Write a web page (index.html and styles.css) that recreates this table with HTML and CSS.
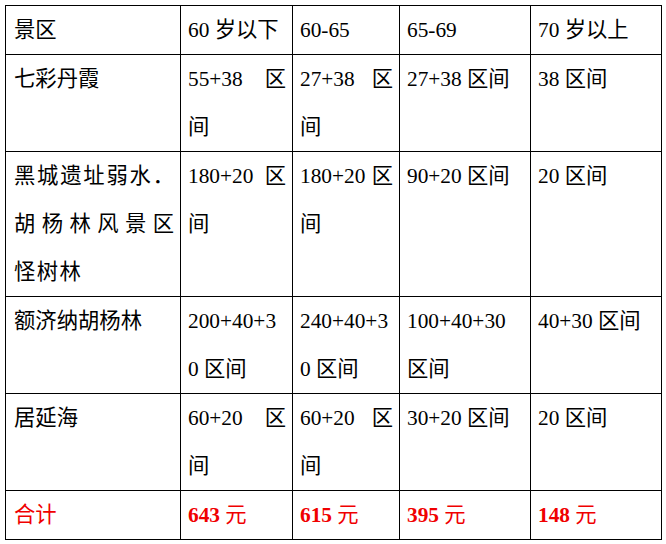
FILE: index.html
```html
<!DOCTYPE html>
<html lang="zh-CN">
<head>
<meta charset="utf-8">
<title>景区门票</title>
<link rel="stylesheet" href="styles.css">
</head>
<body>
<table class="fees">
  <colgroup>
    <col class="c-name">
    <col class="c-a">
    <col class="c-b">
    <col class="c-c">
    <col class="c-d">
  </colgroup>
  <tr>
    <td class="name">景区</td>
    <td>60 岁以下</td>
    <td>60-65</td>
    <td>65-69</td>
    <td>70 岁以上</td>
  </tr>
  <tr>
    <td class="name">七彩丹霞</td>
    <td>55+38 区间</td>
    <td>27+38 区间</td>
    <td>27+38 区间</td>
    <td>38 区间</td>
  </tr>
  <tr>
    <td class="name"><span class="ln jl">黑城遗址弱水．</span><span class="ln jl">胡杨林风景区</span><span class="ln sp">怪树林</span></td>
    <td>180+20 区间</td>
    <td>180+20 区间</td>
    <td>90+20 区间</td>
    <td>20 区间</td>
  </tr>
  <tr>
    <td class="name">额济纳胡杨林</td>
    <td>200+40+30 区间</td>
    <td>240+40+30 区间</td>
    <td>100+40+30 区间</td>
    <td>40+30 区间</td>
  </tr>
  <tr>
    <td class="name">居延海</td>
    <td>60+20 区间</td>
    <td>60+20 区间</td>
    <td>30+20 区间</td>
    <td>20 区间</td>
  </tr>
  <tr class="total">
    <td class="name">合计</td>
    <td><strong>643</strong> 元</td>
    <td><strong>615</strong> 元</td>
    <td><strong>395</strong> 元</td>
    <td><strong>148</strong> 元</td>
  </tr>
</table>
</body>
</html>
```
FILE: styles.css
```css
html, body {
  margin: 0;
  padding: 0;
  background: #ffffff;
}

body {
  font-family: "Liberation Serif", "Noto Sans CJK SC", serif;
  font-size: 21.33px;
  color: #000000;
}

.fees {
  margin: 5px 0 0 5px;
  width: 657px;
  border-collapse: collapse;
  table-layout: fixed;
}

.c-name { width: 175px; }
.c-a { width: 112px; }
.c-b { width: 107px; }
.c-c { width: 131px; }
.c-d { width: 131px; }

.fees td {
  border: 1px solid #000000;
  padding: 0 6px 0 7px;
  line-height: 48px;
  vertical-align: top;
  text-align: justify;
  word-break: break-all;
}

.fees .name {
  padding-left: 8px;
}

.ln {
  display: block;
}

.jl {
  text-align: justify;
  text-align-last: justify;
}

.sp {
  letter-spacing: 1.4px;
}

.total td {
  color: #f00000;
}

.total strong {
  font-weight: bold;
}
```
